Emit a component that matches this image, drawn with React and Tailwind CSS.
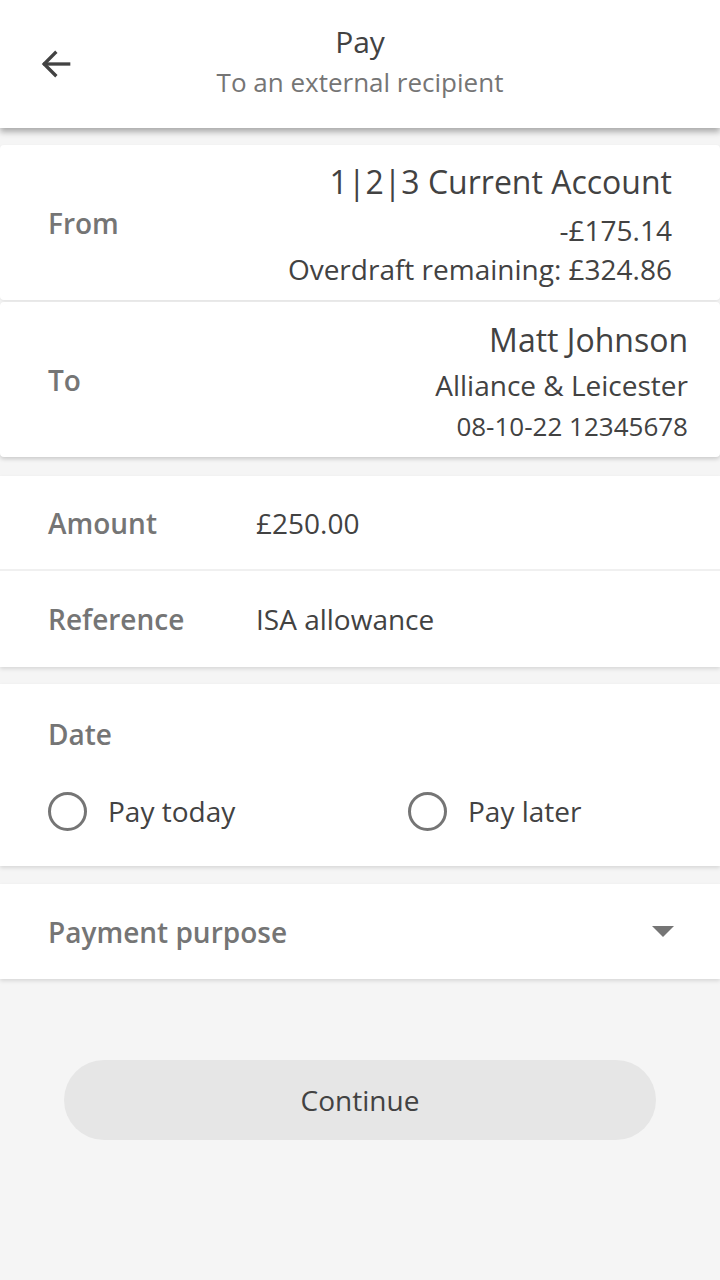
import { useState } from "react";

const font = { fontFamily: '"Open Sans", "Noto Sans", sans-serif' };

function Radio({ label, checked, onClick }) {
  return (
    <button onClick={onClick} className="flex items-center gap-[21px]">
      <span className="w-[39px] h-[39px] rounded-full border-[3px] border-[#757575] flex items-center justify-center">
        {checked && <span className="w-[19px] h-[19px] rounded-full bg-[#757575]" />}
      </span>
      <span className="text-[28px] text-[#424242]">{label}</span>
    </button>
  );
}

export default function App() {
  const [when, setWhen] = useState(null);

  return (
    <div style={font} className="min-h-[1280px] bg-[#f5f5f5]">
      <header className="relative h-[128px] bg-white shadow-[0_4px_6px_rgba(0,0,0,0.3)] flex flex-col items-center justify-center z-10">
        <button className="absolute left-[37px] top-[45px]">
          <svg width="38" height="38" viewBox="0 0 24 24" fill="none" stroke="#424242" strokeWidth="2.1" strokeLinecap="square">
            <path d="M20 12H5" />
            <path d="M11.5 5L4.5 12l7 7" />
          </svg>
        </button>
        <div className="text-[30px] leading-[40px] text-[#424242] -mt-[4px]">Pay</div>
        <div className="text-[26px] leading-[40px] text-[#757575]">To an external recipient</div>
      </header>

      <div className="pt-[17px]">
        <div className="bg-white rounded-[4px] shadow-[0_1px_3px_rgba(0,0,0,0.08)] h-[155px] flex items-center justify-between pl-[48px] pr-[48px]">
          <div className="text-[28px] font-semibold text-[#757575]">From</div>
          <div className="text-right text-[#424242] -mt-[3px]">
            <div className="text-[32px] leading-[44px]">1|2|3 Current Account</div>
            <div className="text-[28px] leading-[52px]">-£175.14</div>
            <div className="text-[28px] leading-[26px]">Overdraft remaining: £324.86</div>
          </div>
        </div>

        <div className="mt-[2px] bg-white rounded-[4px] shadow-[0_2px_4px_rgba(0,0,0,0.18)] h-[155px] flex items-center justify-between pl-[48px] pr-[32px]">
          <div className="text-[28px] font-semibold text-[#757575]">To</div>
          <div className="text-right text-[#424242] mt-[2px]">
            <div className="text-[32px] leading-[44px]">Matt Johnson</div>
            <div className="text-[28px] leading-[46px]">Alliance &amp; Leicester</div>
            <div className="text-[26px] leading-[36px]">08-10-22 12345678</div>
          </div>
        </div>
      </div>

      <div className="mt-[19px] bg-white shadow-[0_2px_4px_rgba(0,0,0,0.12)]">
        <div className="h-[95px] flex items-center pl-[48px] border-b-2 border-[#f0f0f0]">
          <div className="w-[208px] text-[28px] font-semibold text-[#757575]">Amount</div>
          <div className="text-[28px] text-[#424242]">£250.00</div>
        </div>
        <div className="h-[96px] flex items-center pl-[48px]">
          <div className="w-[208px] text-[28px] font-semibold text-[#757575]">Reference</div>
          <div className="text-[28px] text-[#424242]">ISA allowance</div>
        </div>
      </div>

      <div className="mt-[17px] bg-white shadow-[0_2px_4px_rgba(0,0,0,0.12)] h-[182px] pl-[48px] pt-[30px]">
        <div className="text-[28px] font-semibold text-[#757575] leading-[40px]">Date</div>
        <div className="flex mt-[36px]">
          <div className="w-[360px]">
            <Radio label="Pay today" checked={when === "today"} onClick={() => setWhen("today")} />
          </div>
          <Radio label="Pay later" checked={when === "later"} onClick={() => setWhen("later")} />
        </div>
      </div>

      <div className="mt-[18px] bg-white shadow-[0_2px_4px_rgba(0,0,0,0.12)] h-[95px] flex items-center justify-between pl-[48px] pr-[46px]">
        <div className="text-[28px] font-semibold text-[#757575]">Payment purpose</div>
        <svg width="22" height="12" viewBox="0 0 22 12">
          <path d="M0 0h22L11 11z" fill="#757575" />
        </svg>
      </div>

      <div className="px-[64px] pt-[81px]">
        <button className="w-full h-[80px] rounded-full bg-[#e6e6e6] text-[28px] text-[#424242]">
          Continue
        </button>
      </div>
    </div>
  );
}
